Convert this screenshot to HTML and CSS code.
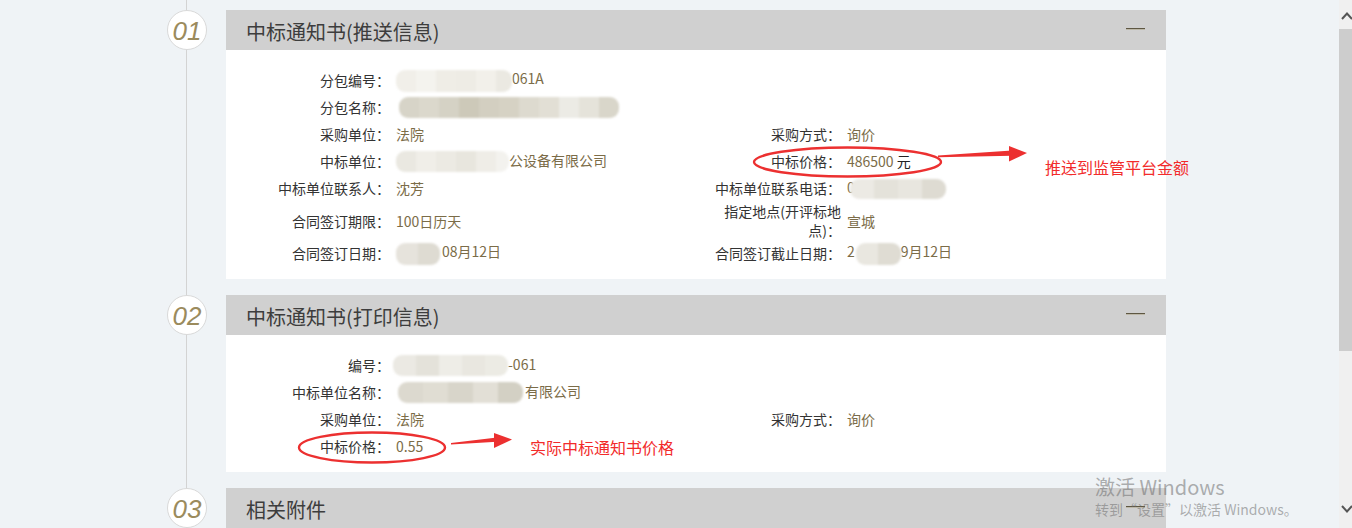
FILE: index.html
```html
<!DOCTYPE html>
<html lang="zh-CN">
<head>
    <meta charset="UTF-8">
    <meta name="viewport" content="width=device-width, initial-scale=1.0">
    <title>中标通知书</title>
    <link rel="stylesheet" href="styles.css">
</head>
<body>
    <div class="screen">
        <div class="viewport">
            <div class="timeline">
                <section class="step">
                    <div class="step-no">01</div>
                    <div class="panel">
                        <div class="panel-head">
                            <h3>中标通知书(推送信息)</h3>
                            <span class="fold"></span>
                        </div>
                        <div class="panel-body">
                            <div class="label">分包编号：</div>
                            <div class="value wide"><span class="mosaic m-code"></span>061A</div>
                            <div class="label">分包名称：</div>
                            <div class="value wide"><span class="mosaic m-pkg"></span></div>
                            <div class="label">采购单位：</div>
                            <div class="value">法院</div>
                            <div class="label">采购方式：</div>
                            <div class="value">询价</div>
                            <div class="label">中标单位：</div>
                            <div class="value"><span class="mosaic m-corp"></span>公设备有限公司</div>
                            <div class="label">中标价格：</div>
                            <div class="value">486500 <span class="unit">元</span></div>
                            <div class="label">中标单位联系人：</div>
                            <div class="value">沈芳</div>
                            <div class="label">中标单位联系电话：</div>
                            <div class="value">0<span class="mosaic m-tel"></span></div>
                            <div class="label">合同签订期限：</div>
                            <div class="value">100日历天</div>
                            <div class="label">指定地点(开评标地点)：</div>
                            <div class="value">宣城</div>
                            <div class="label">合同签订日期：</div>
                            <div class="value"><span class="mosaic m-date"></span>08月12日</div>
                            <div class="label">合同签订截止日期：</div>
                            <div class="value">2<span class="mosaic m-date2"></span>9月12日</div>
                        </div>
                    </div>
                </section>

                <section class="step">
                    <div class="step-no">02</div>
                    <div class="panel">
                        <div class="panel-head">
                            <h3>中标通知书(打印信息)</h3>
                            <span class="fold"></span>
                        </div>
                        <div class="panel-body">
                            <div class="label">编号：</div>
                            <div class="value wide"><span class="mosaic m-no"></span>-061</div>
                            <div class="label">中标单位名称：</div>
                            <div class="value wide"><span class="mosaic m-name"></span>有限公司</div>
                            <div class="label">采购单位：</div>
                            <div class="value">法院</div>
                            <div class="label">采购方式：</div>
                            <div class="value">询价</div>
                            <div class="label">中标价格：</div>
                            <div class="value wide">0.55</div>
                        </div>
                    </div>
                </section>

                <section class="step">
                    <div class="step-no">03</div>
                    <div class="panel">
                        <div class="panel-head">
                            <h3>相关附件</h3>
                            <span class="fold"></span>
                        </div>
                    </div>
                </section>
            </div>

            <!-- red hand-drawn notes on top of the page -->
            <svg class="marks" width="1339" height="528" viewBox="0 0 1339 528">
                <ellipse cx="847.5" cy="162" rx="93.5" ry="14.5" fill="none" stroke="#ec3030" stroke-width="2.4"/>
                <polygon points="938,155.5 1012,150.5 1012,155.8 938,157.3" fill="#ec3030"/>
                <polygon points="1009,146 1027,153 1009,161.5" fill="#ec3030"/>
                <ellipse cx="372" cy="447.5" rx="73" ry="15" fill="none" stroke="#ec3030" stroke-width="2.4"/>
                <polygon points="451,443 497,437.5 497,441.8 451,444.6" fill="#ec3030"/>
                <polygon points="494,433 512,439.5 494,448" fill="#ec3030"/>
            </svg>
            <span class="note note-push">推送到监管平台金额</span>
            <span class="note note-real">实际中标通知书价格</span>

            <div class="activate">
                <div class="activate-title">激活 Windows</div>
                <div class="activate-sub">转到“设置”以激活 Windows。</div>
            </div>
        </div>

        <div class="scrollbar">
            <div class="sb-btn">
                <svg width="13" height="29" viewBox="0 0 13 29"><polyline points="3,19 8,13.5 13,19" fill="none" stroke="#555" stroke-width="2"/></svg>
            </div>
            <div class="sb-thumb"></div>
            <div class="sb-track"></div>
            <div class="sb-btn sb-btn-down">
                <svg width="13" height="38" viewBox="0 0 13 38"><polyline points="3,16 8,21.5 13,16" fill="none" stroke="#555" stroke-width="2"/></svg>
            </div>
        </div>
    </div>
</body>
</html>
```

FILE: styles.css
```css
body {
    margin: 0;
    font-family: "Noto Sans CJK SC", "Microsoft YaHei", sans-serif;
}
.screen {
    display: flex;
    height: 528px;
    overflow: hidden;
}
.viewport {
    flex: 1;
    position: relative;
    background: #eff3f6;
    overflow: hidden;
}
.timeline {
    width: 999px;
    margin-left: 167px;
    padding-top: 10px;
    min-height: 100%;
    background: linear-gradient(#d3d3d3, #d3d3d3) 19px 0 / 1px 100% no-repeat;
}
.step {
    display: grid;
    grid-template-columns: 40px 940px;
    column-gap: 19px;
    align-items: start;
}
.step + .step {
    margin-top: 16px;
}
.step-no {
    width: 38px;
    height: 36px;
    padding-top: 2px;
    border: 1px solid #d9d9d9;
    border-radius: 50%;
    background: #fff;
    display: flex;
    align-items: center;
    justify-content: center;
    font-family: "Liberation Sans", Arial, sans-serif;
    font-style: italic;
    font-size: 26px;
    color: #9b8b5d;
}
.panel-head {
    height: 40px;
    background: #d0d0d0;
    display: flex;
    align-items: center;
    justify-content: space-between;
    padding: 0 21px 0 20px;
}
.panel-head h3 {
    margin: 0;
    padding-top: 2px;
    font-size: 20px;
    font-weight: normal;
    color: #3d3d3d;
}
.fold {
    width: 19px;
    height: 1px;
    margin-bottom: 3px;
    background: #5e5743;
    box-shadow: 0 1px 0 #bdb8a8;
}
.panel-body {
    background: #fff;
    padding: 17px 8px 12px 36px;
    display: grid;
    grid-template-columns: 128px 311px 128px 311px;
    column-gap: 6px;
    grid-auto-rows: minmax(27px, auto);
    align-items: center;
    font-size: 14px;
    line-height: 19px;
}
.label {
    text-align: right;
    color: #333;
}
.value {
    color: #7b6c48;
    white-space: nowrap;
}
.value.wide {
    grid-column: span 3;
}
.unit {
    color: #222;
}

/* blurred-out parts of the values */
.mosaic {
    display: inline-block;
    vertical-align: middle;
    height: 22px;
    border-radius: 9px;
    filter: blur(1px);
}
.m-code {
    width: 116px;
    background: linear-gradient(90deg, #f1efe9 0 20px, #f4f3ee 20px 40px, #efede6 40px 60px, #eeece5 60px 80px, #f2f0ea 80px 100px, #ebe9e2 100px);
}
.m-pkg {
    width: 220px;
    height: 21px;
    margin-left: 3px;
    background: linear-gradient(90deg, #d7d4c8 0 20px, #dbd8cc 20px 40px, #d5d2c5 40px 60px, #cdc9b9 60px 80px, #d3cfc1 80px 100px, #d6d2c4 100px 120px, #dddacf 120px 140px, #e2dfd5 140px 160px, #ecebe5 160px 180px, #e5e3da 180px 200px, #d9d6ca 200px);
}
.m-corp {
    width: 113px;
    height: 21px;
    background: linear-gradient(90deg, #eae8e1 0 20px, #f0eee8 20px 40px, #eceae3 40px 60px, #e8e6de 60px 80px, #efede7 80px 100px, #f3f2ee 100px);
}
.m-tel {
    width: 96px;
    height: 20px;
    margin-left: -5px;
    background: linear-gradient(90deg, #eceae4 0 24px, #e4e2da 24px 48px, #e8e6df 48px 72px, #dedbd2 72px);
}
.m-date {
    width: 44px;
    margin-right: 2px;
    background: linear-gradient(90deg, #e6e3dc 0 22px, #dedbd2 22px);
}
.m-date2 {
    width: 45px;
    margin-left: 1px;
    background: linear-gradient(90deg, #e9e7e0 0 22px, #dfdcd3 22px);
}
.m-no {
    width: 115px;
    height: 21px;
    margin-left: -3px;
    background: linear-gradient(90deg, #ebe9e3 0 23px, #e4e2da 23px 46px, #eeede7 46px 69px, #e9e7e0 69px 92px, #ecebe4 92px);
}
.m-name {
    width: 125px;
    height: 21px;
    margin-left: 2px;
    margin-right: 2px;
    background: linear-gradient(90deg, #dcd9cf 0 25px, #e0ddd3 25px 50px, #d8d5ca 50px 75px, #e2dfd6 75px 100px, #d3d0c4 100px);
}

.marks {
    position: absolute;
    top: 0;
    left: 0;
    pointer-events: none;
}
.note {
    position: absolute;
    color: #f22b2b;
    font-size: 16px;
    line-height: 20px;
    white-space: nowrap;
}
.note-push {
    left: 1045px;
    top: 157px;
}
.note-real {
    left: 530px;
    top: 437px;
}
.activate {
    position: absolute;
    left: 1095px;
    top: 475px;
    color: rgba(110, 110, 110, 0.55);
    white-space: nowrap;
    pointer-events: none;
}
.activate-title {
    font-size: 20px;
    line-height: 24px;
}
.activate-sub {
    font-size: 14px;
    line-height: 20px;
}

.scrollbar {
    width: 13px;
    background: #f0f0f0;
    display: flex;
    flex-direction: column;
    overflow: hidden;
}
.sb-btn {
    height: 29px;
}
.sb-btn svg {
    display: block;
}
.sb-btn-down {
    height: 38px;
}
.sb-thumb {
    height: 322px;
    background: #cdcdcd;
}
.sb-track {
    flex: 1;
}
```
